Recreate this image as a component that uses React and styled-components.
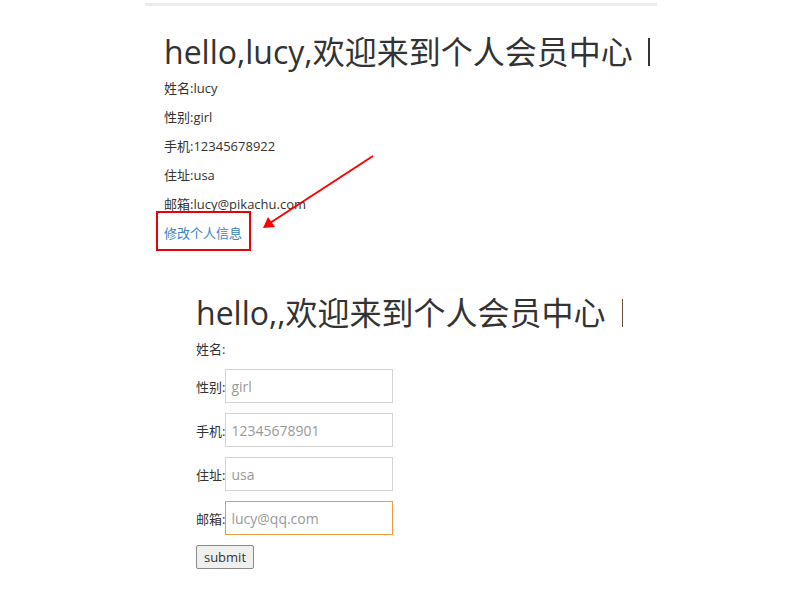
import React from "react";
import styled, { createGlobalStyle } from "styled-components";

const Global = createGlobalStyle`
  html, body { margin: 0; padding: 0; background: #fff; }
  body {
    font-family: "Open Sans", "Noto Sans CJK SC", sans-serif;
    color: #333;
  }
`;

const Page = styled.div`
  position: relative;
  width: 787px;
  height: 590px;
  overflow: hidden;
`;

const Sheet = styled.div`
  margin-left: 145px;
  width: 512px;
  padding-top: 3px;
`;

const TopRule = styled.div`
  height: 3px;
  background: #ececec;
`;

const Section = styled.section`
  padding-left: ${(p) => p.$indent}px;
  padding-top: ${(p) => p.$top}px;
`;

const Heading = styled.h1`
  margin: 0 0 2px;
  font-size: 32px;
  font-weight: 400;
  line-height: 40px;
  color: #333;
  white-space: nowrap;
  display: flex;
  align-items: center;
`;

const Cursor = styled.span`
  display: inline-block;
  width: ${(p) => p.$w}px;
  height: 28px;
  margin-left: ${(p) => p.$gap}px;
  background: ${(p) => p.$color};
`;

const InfoLine = styled.div`
  font-size: 13px;
  line-height: 29px;
  color: #333;
`;

const EditLink = styled.a`
  display: inline-block;
  font-size: 13px;
  line-height: 29px;
  color: #3a82c4;
  text-decoration: none;
`;

const Form = styled.form`
  display: flex;
  flex-direction: column;
  align-items: flex-start;
`;

const NameLine = styled.div`
  font-size: 13px;
  line-height: 20px;
  margin-top: 4px;
  margin-bottom: 10px;
`;

const Row = styled.label`
  display: flex;
  align-items: center;
  font-size: 13px;
  margin-bottom: 10px;
`;

const Field = styled.input`
  box-sizing: border-box;
  width: 168px;
  height: 34px;
  margin: 0;
  padding: 0 5px;
  border: 1px solid ${(p) => (p.$focus ? "#f39a3a" : "#d3d3d3")};
  outline: none;
  font-family: "Open Sans", sans-serif;
  font-size: 14px;
  color: #888;
  &::placeholder { color: #999; }
`;

const Submit = styled.button`
  box-sizing: border-box;
  width: 58px;
  height: 24px;
  padding: 0;
  border: 1px solid #8a8a8a;
  border-radius: 2px;
  background: #efefef;
  font-family: "Open Sans", sans-serif;
  font-size: 13px;
  color: #333;
`;

const Annotation = styled.svg`
  position: absolute;
  left: 0;
  top: 0;
  pointer-events: none;
`;

export default function App() {
  return (
    <Page>
      <Global />
      <Sheet>
        <TopRule />
        <Section $indent={19} $top={26}>
          <Heading>
            hello,lucy,欢迎来到个人会员中心
            <Cursor $w={2} $gap={15} $color="#333" />
          </Heading>
          <InfoLine>姓名:lucy</InfoLine>
          <InfoLine>性别:girl</InfoLine>
          <InfoLine>手机:12345678922</InfoLine>
          <InfoLine>住址:usa</InfoLine>
          <InfoLine>邮箱:lucy@pikachu.com</InfoLine>
          <EditLink href="#">修改个人信息</EditLink>
        </Section>
        <Section $indent={51} $top={45}>
          <Heading>
            hello,,欢迎来到个人会员中心
            <Cursor $w={1} $gap={16} $color="#6a5030" />
          </Heading>
          <Form onSubmit={(e) => e.preventDefault()}>
            <NameLine>姓名:</NameLine>
            <Row>
              性别:<Field placeholder="girl" />
            </Row>
            <Row>
              手机:<Field placeholder="12345678901" />
            </Row>
            <Row>
              住址:<Field placeholder="usa" />
            </Row>
            <Row>
              邮箱:<Field placeholder="lucy@qq.com" $focus />
            </Row>
            <Submit type="submit">submit</Submit>
          </Form>
        </Section>
      </Sheet>
      <Annotation width="787" height="590" viewBox="0 0 787 590">
        <rect x="157" y="212" width="93" height="38" fill="none" stroke="#e8000b" strokeWidth="2" />
        <line x1="373" y1="156" x2="270" y2="223" stroke="#f00" strokeWidth="2" />
        <polygon points="263,228 268,217 275,227" fill="#f00" />
      </Annotation>
    </Page>
  );
}
